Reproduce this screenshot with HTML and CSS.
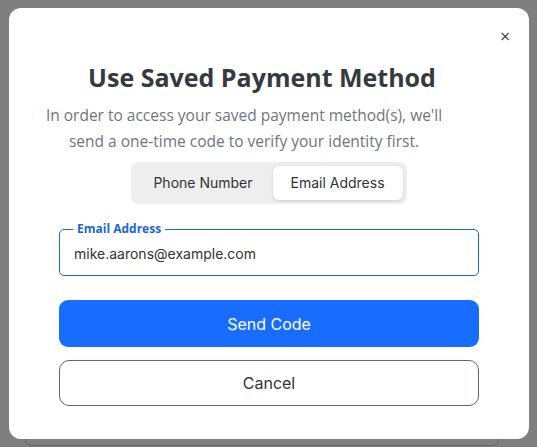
FILE: index.html
```html
<html>
    <head>
        <title>Use Saved Payment Method</title>
        <meta charset="UTF-8">
        <meta name="viewport" content="width=device-width, initial-scale=1.0">
        <link rel="stylesheet" href="styles.css">
    </head>
    <body>
        <div class="pagina">
            <div class="fondo-caja"></div>
        </div>
        <div class="filtro"></div>
        <div class="modal">
            <button class="cerrar">&times;</button>
            <h1 class="titulo">Use Saved Payment Method</h1>
            <p class="texto">In order to access your saved payment method(s), we'll send a one-time code to verify your identity first.</p>
            <div class="center">
                <div class="tabs">
                    <div class="tab">Phone Number</div>
                    <div class="tab activo">Email Address</div>
                </div>
            </div>
            <fieldset class="campo">
                <legend>Email Address</legend>
                <input type="email" value="mike.aarons@example.com"/>
            </fieldset>
            <button class="enviar">Send Code</button>
            <button class="cancelar">Cancel</button>
        </div>
    </body>
</html>
```

FILE: styles.css
```css
body{
    margin: 0px;
    width: 537px;
    height: 447px;
    overflow: hidden;
    font-family: "Open Sans", sans-serif;
    background-color: #ffffff;
}

.pagina{
    position: absolute;
    top: 0px;
    left: 0px;
    width: 100%;
    height: 100%;
}

.fondo-caja{
    position: absolute;
    left: 25px;
    top: 300px;
    width: 472px;
    height: 144px;
    border: 1px solid #cccccc;
    border-radius: 6px;
}

.filtro{
    position: absolute;
    top: 0px;
    left: 0px;
    width: 100%;
    height: 100%;
    background-color: #000000;
    opacity: 0.5;
}

.modal{
    position: absolute;
    left: 9px;
    top: 8px;
    width: 520px;
    height: 431px;
    box-sizing: border-box;
    background-color: white;
    border-radius: 12px;
    padding: 50px 50px 0px 50px;
}

.cerrar{
    position: absolute;
    top: 18px;
    right: 12px;
    background: none;
    border: 0px;
    font-size: 14px;
    color: #343a40;
    font-family: "DejaVu Sans", sans-serif;
    padding: 2px 6px;
    cursor: pointer;
}

.titulo{
    margin: 0px;
    font-size: 25px;
    font-weight: 700;
    color: #343a40;
    text-align: center;
    line-height: 38px;
    padding-right: 14px;
}

.texto{
    margin: 6px -20px 0px -20px;
    padding-right: 50px;
    font-size: 15.5px;
    line-height: 26px;
    color: #6f767d;
    text-align: center;
}

.center{
    text-align: center;
    margin-top: 8px;
}

.tabs{
    display: inline-flex;
    background-color: #eeeeee;
    border-radius: 8px;
    padding: 4px;
    gap: 2px;
}

.tab{
    font-family: Inter, sans-serif;
    font-size: 14px;
    color: #333333;
    height: 34px;
    line-height: 34px;
    padding: 0px 18px;
    border-radius: 6px;
}

.tab.activo{
    background-color: white;
    box-shadow: 0px 1px 3px rgba(0,0,0,0.15);
}

.campo{
    margin: 19px 0px 0px 0px;
    border: 1px solid #1b66d2;
    border-radius: 5px;
    padding: 0px 14px 8px 14px;
    height: 53px;
    box-sizing: border-box;
}

.campo legend{
    font-size: 12px;
    font-weight: 700;
    color: #1b66d2;
    padding: 0px 4px;
    margin-left: -1px;
    line-height: 12px;
}

.campo input{
    border: 0px;
    outline: none;
    width: 100%;
    padding: 0px;
    margin-top: 10px;
    font-family: Inter, sans-serif;
    font-size: 14px;
    color: #333333;
    background: none;
}

.enviar{
    display: block;
    width: 100%;
    height: 47px;
    margin-top: 24px;
    border: 0px;
    border-radius: 9px;
    background-color: #196dfe;
    color: white;
    font-family: Inter, sans-serif;
    font-size: 16px;
}

.cancelar{
    display: block;
    width: 100%;
    height: 46px;
    margin-top: 13px;
    border: 1px solid #5c6578;
    border-radius: 10px;
    background-color: white;
    color: #333333;
    font-family: Inter, sans-serif;
    font-size: 16px;
}
```
